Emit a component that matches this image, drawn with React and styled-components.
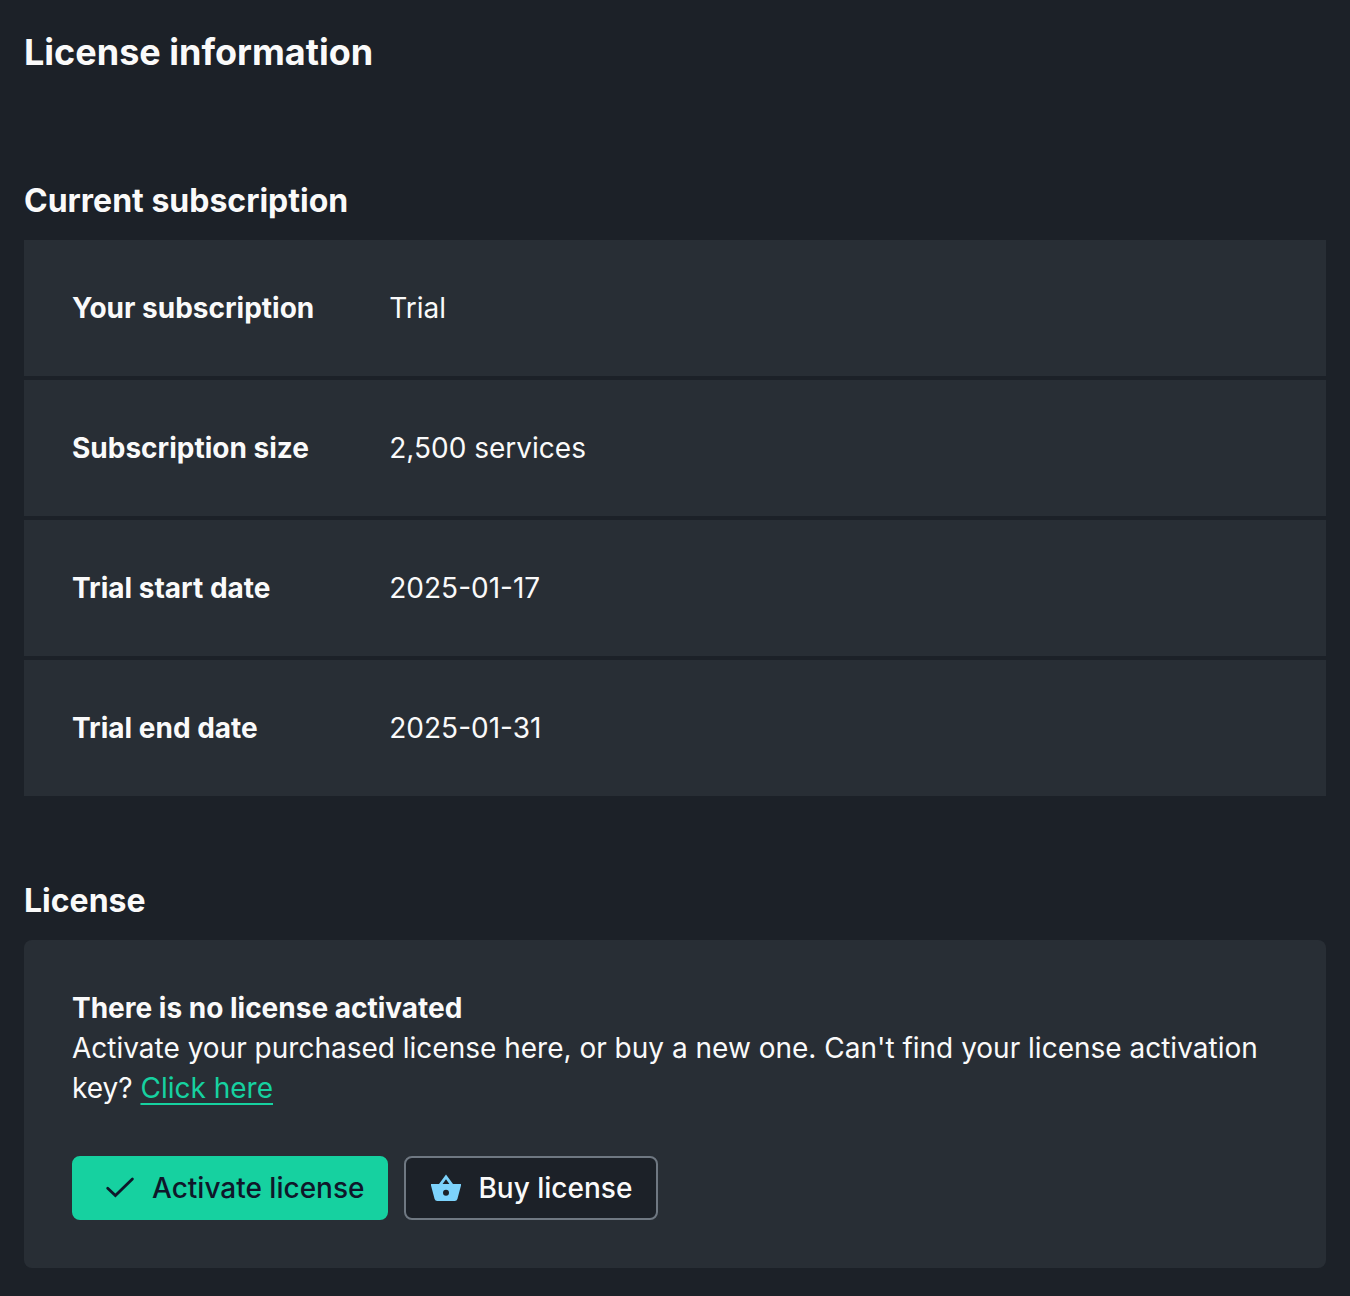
import React from "react";
import styled, { createGlobalStyle } from "styled-components";

const GlobalStyle = createGlobalStyle`
  *, *::before, *::after { box-sizing: border-box; }
  body {
    margin: 0;
    background: #1c2128;
    color: #fafafa;
    font: 400 28px/40px Inter, sans-serif;
  }
`;

const Page = styled.main`
  display: flex;
  flex-direction: column;
  min-height: 1296px;
  padding: 24px 24px 28px;
`;

const Title = styled.h1`
  margin: 0 0 96px;
  font-size: 36px;
  line-height: 56px;
  font-weight: 700;
`;

const Section = styled.section`
  & + & { margin-top: 80px; }
`;

const SectionTitle = styled.h2`
  margin: 0;
  padding: 1px 0 15px;
  font-size: 32px;
  line-height: 48px;
  font-weight: 700;
`;

const Details = styled.dl`
  display: grid;
  gap: 4px;
  margin: 0;
`;

const Row = styled.div`
  display: grid;
  grid-template-columns: 317.300px 1fr;
  padding: 48px;
  background: #282e35;
`;

const Label = styled.dt`
  font-weight: 700;
`;

const Value = styled.dd`
  margin: 0;
`;

const Card = styled.div`
  padding: 48px;
  border-radius: 8px;
  background: #282e35;
`;

const CardTitle = styled.h3`
  margin: 0;
  font-size: inherit;
  font-weight: 700;
`;

const Text = styled.p`
  margin: 0;
`;

const Link = styled.a`
  color: #16d1a0;
  text-decoration: underline 2px;
  text-underline-offset: 5px;
  text-decoration-skip-ink: none;
`;

const Actions = styled.div`
  display: flex;
  gap: 16px;
  margin-top: 48px;
`;

const Button = styled.button`
  display: flex;
  align-items: center;
  gap: 16px;
  height: 64px;
  padding: ${(p) => (p.$primary ? "0 22px 0 30px" : "0 24px")};
  border: 2px solid ${(p) => (p.$primary ? "#16d1a0" : "#6f7882")};
  border-radius: 8px;
  background: ${(p) => (p.$primary ? "#16d1a0" : "#1c2128")};
  color: ${(p) => (p.$primary ? "#0f172a" : "#fafafa")};
  font: 500 28px/40px Inter, sans-serif;
  white-space: nowrap;
`;

const Icon = styled.svg`
  display: block;
  flex: none;
  width: 32px;
  height: 32px;
`;

const details = [
  ["Your subscription", "Trial"],
  ["Subscription size", "2,500 services"],
  ["Trial start date", "2025-01-17"],
  ["Trial end date", "2025-01-31"],
];

export default function App() {
  return (
    <Page>
      <GlobalStyle />
      <Title>License information</Title>
      <Section>
        <SectionTitle>Current subscription</SectionTitle>
        <Details>
          {details.map(([label, value]) => (
            <Row key={label}>
              <Label>{label}</Label>
              <Value>{value}</Value>
            </Row>
          ))}
        </Details>
      </Section>
      <Section>
        <SectionTitle>License</SectionTitle>
        <Card>
          <CardTitle>There is no license activated</CardTitle>
          <Text>
            Activate your purchased license here, or buy a new one. Can't find
            your license activation key? <Link href="#">Click here</Link>
          </Text>
          <Actions>
            <Button $primary>
              <Icon viewBox="0 0 32 32" fill="none" stroke="currentColor" strokeWidth="2.8" strokeLinecap="round">
                <path d="M3.700 16.200 11.400 23.600 28.400 6.900" />
              </Icon>
              Activate license
            </Button>
            <Button>
              <Icon viewBox="0 0 32 32" fill="#7dd3fc">
                <path
                  fillRule="evenodd"
                  d="M16 2.500 9 12H1V13.500L4.600 27Q5.200 29 7.200 29H24.800Q26.800 29 27.400 27L31 13.500V12H23ZM16 7.300 19.400 12H12.600ZM16 17.700a3 3 0 1 1 0 6 3 3 0 0 1 0-6Z"
                />
              </Icon>
              Buy license
            </Button>
          </Actions>
        </Card>
      </Section>
    </Page>
  );
}
